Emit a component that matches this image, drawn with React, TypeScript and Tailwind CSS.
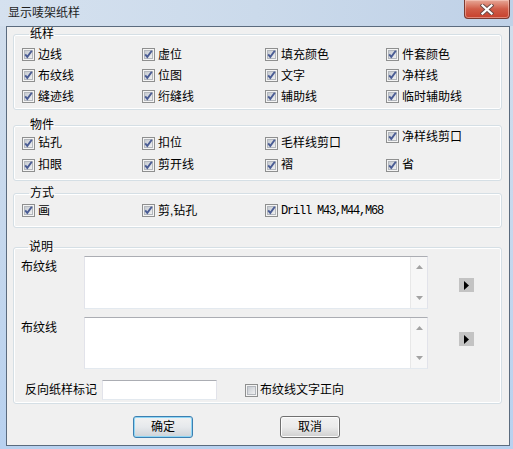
import React from 'react';

function CheckBox({ checked = true }: { checked?: boolean }) {
  return (
    <svg width="13" height="13" viewBox="0 0 13 13" className="shrink-0">
      <defs>
        <linearGradient id="cb-fill" x1="0" y1="0" x2="1" y2="1">
          <stop offset="0" stopColor="#c3c8cf" />
          <stop offset="1" stopColor="#f3f3f3" />
        </linearGradient>
      </defs>
      <rect x="0.5" y="0.5" width="12" height="12" fill="#f4f4f4" stroke="#8e8f8f" />
      <rect x="2.5" y="2.5" width="8" height="8" fill="url(#cb-fill)" stroke="#b3b7bd" />
      {checked && (
        <path d="M3.2 6.4 L5.3 8.9 L9.8 2.8" fill="none" stroke="#4a5c94" strokeWidth="1.9" />
      )}
    </svg>
  );
}

function Check({ label, className = '', mono }: { label: string; className?: string; mono?: boolean }) {
  return (
    <div className={`flex items-center gap-[3px] ${className}`}>
      <CheckBox />
      <span
        className={
          mono
            ? "font-['Liberation_Mono',monospace] text-[12px] tracking-[-1.2px] leading-[14px]"
            : 'text-[12px] leading-[14px]'
        }
      >
        {label}
      </span>
    </div>
  );
}

function Group({ title, className = '', children }: { title: string; className?: string; children: React.ReactNode }) {
  return (
    <fieldset
      className={`ml-[6px] mr-[7px] border border-[#d5dfe5] rounded-[3px] shadow-[inset_0_0_0_1px_#ffffff] ${className}`}
    >
      <legend className="ml-[7px] px-[1px] text-[12px] leading-[14px]">{title}</legend>
      {children}
    </fieldset>
  );
}

function ArrowButton({ className = '' }: { className?: string }) {
  return (
    <div className={`w-[15px] h-[14px] bg-[#c3c3c3] flex items-center justify-center shrink-0 ${className}`}>
      <svg width="5" height="9" viewBox="0 0 5 9">
        <path d="M0 0 L5 4.5 L0 9 Z" fill="#000" />
      </svg>
    </div>
  );
}

function MemoBox({ className = '' }: { className?: string }) {
  return (
    <div
      className={`w-[344px] flex bg-white border border-[#e2e3ea] border-t-[#abadb3] border-b-[#e3e9ef] ${className}`}
    >
      <div className="flex-1" />
      <div className="w-[17px] bg-[#f7f7f7] border-l border-[#e8e8e8] flex flex-col items-center justify-between py-[8px]">
        <svg width="7" height="4" viewBox="0 0 7 4">
          <path d="M0 4 L3.5 0 L7 4 Z" fill="#a3a3a3" />
        </svg>
        <svg width="7" height="4" viewBox="0 0 7 4">
          <path d="M0 0 L3.5 4 L7 0 Z" fill="#a3a3a3" />
        </svg>
      </div>
    </div>
  );
}

export default function App() {
  return (
    <div className="w-[513px] h-[449px] flex flex-col bg-gradient-to-b from-[#d2deec] via-[#c6d8ed] to-[#b8d1ef] font-['Liberation_Sans','Noto_Sans_CJK_SC',sans-serif] text-black overflow-hidden">
      {/* title bar */}
      <div className="h-[26px] flex shrink-0 bg-gradient-to-r from-[#d5e1ef] via-[#cbdaeb] to-[#bfd1e7]">
        <span className="pl-[8px] pt-[6px] text-[12px] leading-[14px] text-[#1e1e1e]">显示唛架纸样</span>
        <div className="ml-auto mr-[3px] w-[46px] h-[19px] rounded-b-[4px] border border-t-0 border-[#7b3a30] bg-gradient-to-b from-[#e6a898] via-[#d05c48] to-[#c7402c] shadow-[inset_0_0_0_1px_rgba(255,220,210,0.45)] flex items-center justify-center">
          <svg width="14" height="11" viewBox="0 0 14 11">
            <path d="M2.5 1.5 L11.5 9.5 M11.5 1.5 L2.5 9.5" stroke="#6a4a45" strokeWidth="4" strokeLinecap="square" />
            <path d="M2.5 1.5 L11.5 9.5 M11.5 1.5 L2.5 9.5" stroke="#ffffff" strokeWidth="2.2" strokeLinecap="square" />
          </svg>
        </div>
      </div>

      {/* client area */}
      <div className="flex-1 ml-[6px] mr-[3px] mb-[3px] border border-[#5b6b7e] bg-[#f0f0f0] flex flex-col">
        <Group title="纸样" className="pt-[3px] pb-[2px] px-[8px]">
          <div className="grid grid-cols-[120px_123px_121px_1fr] auto-rows-[21px] items-center">
            <Check label="边线" />
            <Check label="虚位" />
            <Check label="填充颜色" />
            <Check label="件套颜色" />
            <Check label="布纹线" />
            <Check label="位图" />
            <Check label="文字" />
            <Check label="净样线" />
            <Check label="缝迹线" />
            <Check label="绗缝线" />
            <Check label="辅助线" />
            <Check label="临时辅助线" />
          </div>
        </Group>

        <Group title="物件" className="mt-[8px] pb-[4px] px-[8px]">
          <div className="grid grid-cols-[120px_123px_121px_1fr] auto-rows-[22px] items-center">
            <Check label="钻孔" />
            <Check label="扣位" />
            <Check label="毛样线剪口" />
            <Check label="净样线剪口" className="-mt-[13px]" />
            <Check label="扣眼" />
            <Check label="剪开线" />
            <Check label="褶" />
            <Check label="省" />
          </div>
        </Group>

        <Group title="方式" className="mt-[5px] pb-[6px] px-[8px]">
          <div className="grid grid-cols-[120px_123px_121px_1fr] auto-rows-[21px] items-center">
            <Check label="画" />
            <Check label="剪,钻孔" />
            <Check label="Drill M43,M44,M68" mono />
          </div>
        </Group>

        <Group title="说明" className="mt-[12px] pb-[3px] pl-[7px]">
          <div className="flex items-start mt-[2px]">
            <span className="w-[63px] pt-[4px] text-[12px] leading-[14px]">布纹线</span>
            <MemoBox className="h-[53px]" />
            <ArrowButton className="ml-[31px] mt-[22px]" />
          </div>
          <div className="flex items-start mt-[8px]">
            <span className="w-[63px] pt-[4px] text-[12px] leading-[14px]">布纹线</span>
            <MemoBox className="h-[52px]" />
            <ArrowButton className="ml-[31px] mt-[15px]" />
          </div>
          <div className="flex items-center mt-[11px]">
            <span className="ml-[4px] text-[12px] leading-[14px]">反向纸样标记</span>
            <div className="ml-[5px] w-[115px] h-[20px] bg-white border border-[#e2e3ea] border-t-[#abadb3] border-b-[#e3e9ef]" />
            <div className="ml-[28px] flex items-center gap-[2px]">
              <CheckBox checked={false} />
              <span className="text-[12px] leading-[14px]">布纹线文字正向</span>
            </div>
          </div>
        </Group>

        <div className="flex mt-[12px] ml-[126px] gap-[87px]">
          <button className="w-[60px] h-[22px] rounded-[3px] border border-[#3c7fb1] bg-gradient-to-b from-[#f2f2f2] via-[#e6e9ec] to-[#cdd3d8] shadow-[inset_0_0_0_1px_#8fd6f5] text-[12px] leading-[14px]">
            确定
          </button>
          <button className="w-[60px] h-[22px] rounded-[3px] border border-[#707070] bg-gradient-to-b from-[#f2f2f2] via-[#ebebeb] to-[#cfcfcf] shadow-[inset_0_0_0_1px_#fcfcfc] text-[12px] leading-[14px]">
            取消
          </button>
        </div>
      </div>
    </div>
  );
}
